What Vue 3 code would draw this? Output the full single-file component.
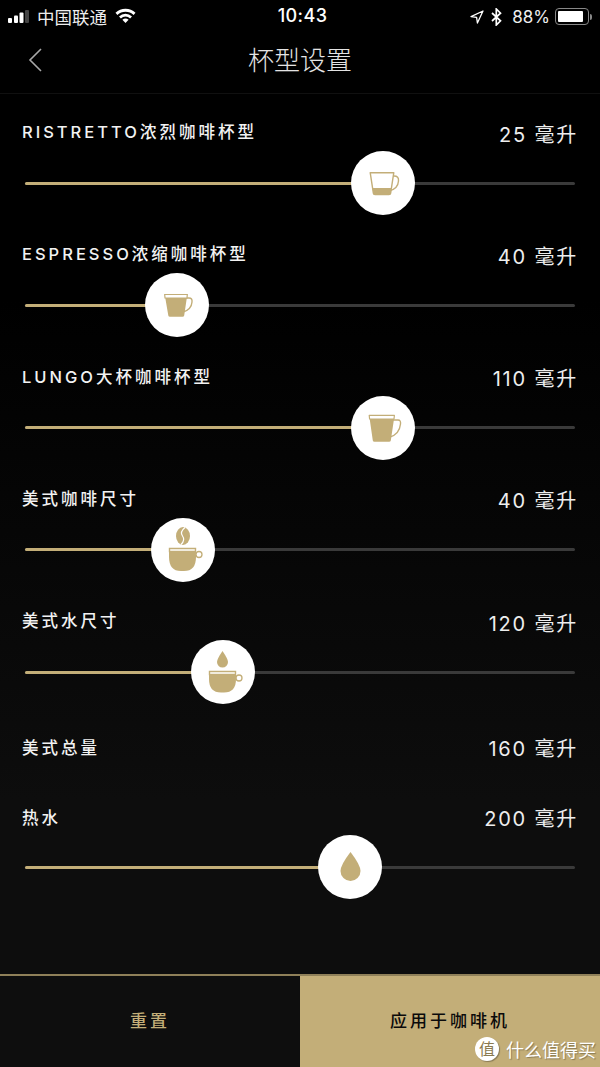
<template>
  <div class="page">
    <div class="status-bar">
      <div class="status-left">
        <svg class="signal" width="21" height="15" viewBox="0 0 21 15">
          <rect x="0" y="9" width="4" height="5" rx="1" fill="#fff" />
          <rect x="6" y="6.5" width="4" height="7.5" rx="1" fill="#fff" />
          <rect x="11.5" y="3.5" width="4" height="10.5" rx="1" fill="#fff" />
          <rect x="17" y="1" width="4" height="13" rx="1" fill="#444" />
        </svg>
        <span class="carrier">中国联通</span>
        <svg class="wifi" width="21" height="15" viewBox="0 0 21 15">
          <path d="M0.5 4.8 A14.5 14.5 0 0 1 20.5 4.8 L18.6 6.9 A11.8 11.8 0 0 0 2.4 6.9 Z" fill="#fff" />
          <path d="M4 8.4 A9.5 9.5 0 0 1 17 8.4 L15.1 10.4 A6.8 6.8 0 0 0 5.9 10.4 Z" fill="#fff" />
          <path d="M7.4 11.8 A4.6 4.6 0 0 1 13.6 11.8 L10.5 15 Z" fill="#fff" />
        </svg>
      </div>
      <span class="time">10:43</span>
      <div class="status-right">
        <svg width="14" height="14" viewBox="0 0 14 14">
          <path d="M13 1 L1 6.6 L6.6 7.4 L7.4 13 Z" fill="none" stroke="#fff" stroke-width="1.3" stroke-linejoin="round" />
        </svg>
        <svg class="bt" width="11" height="18" viewBox="0 0 11 18">
          <path d="M1 5 L9.5 12.8 L5.3 17 V1 L9.5 5.2 L1 13" fill="none" stroke="#fff" stroke-width="1.7" />
        </svg>
        <span class="battery-text">88%</span>
        <div class="battery">
          <div class="battery-level"></div>
        </div>
        <div class="battery-cap"></div>
      </div>
    </div>

    <div class="nav-bar">
      <svg class="back" width="16" height="26" viewBox="0 0 16 26">
        <path d="M14 2 L3 13 L14 24" fill="none" stroke="#a8a8a8" stroke-width="1.6" />
      </svg>
      <span class="nav-title">杯型设置</span>
    </div>

    <div class="content">
      <div v-for="row in rows" :key="row.label" class="row" :class="row.cls">
        <div class="row-head">
          <span class="row-label">{{ row.label }}</span>
          <span class="row-value">{{ row.value }} 毫升</span>
        </div>
        <div v-if="row.knob" class="slider">
          <div class="track">
            <div class="track-fill" :style="{ width: row.knob + 'px' }"></div>
          </div>
          <div class="knob" :style="{ left: row.knob + 'px' }">
            <svg width="64" height="64" viewBox="0 0 64 64">
              <g v-if="row.icon === 'ristretto'">
                <path d="M36.5 25 H43 Q48 25 47.5 30 Q47 38 38 40" fill="none" stroke="#c3ae78" stroke-width="1.4" />
                <path d="M19.2 21.7 H42.8 L39.6 42.4 Q39.4 43.6 38 43.6 H24 Q22.6 43.6 22.4 42.4 Z" fill="#fff" stroke="#c3ae78" stroke-width="1.4" stroke-linejoin="round" />
                <path d="M21.6 37 H40.4 L39.4 43.6 H22.6 Z" fill="#c3ae78" />
              </g>
              <g v-if="row.icon === 'espresso'">
                <path d="M40 25 H44 Q47.5 25 47 29 Q46.5 37 37 39.5" fill="none" stroke="#c3ae78" stroke-width="1.4" />
                <path d="M19.7 21.5 H42.3 L42 25 H20 Z" fill="#fff" stroke="#c3ae78" stroke-width="1.2" />
                <path d="M20.3 25 H41.8 L39.2 42.4 Q39 43.8 37.5 43.8 H25 Q23.5 43.8 23.3 42.4 Z" fill="#c3ae78" />
              </g>
              <g v-if="row.icon === 'lungo'">
                <path d="M42 24 H47 Q50 24 49.5 28 Q48.5 38 39 41" fill="none" stroke="#c3ae78" stroke-width="1.4" />
                <path d="M18.2 19.3 H43.4 L43 23 H18.6 Z" fill="#fff" stroke="#c3ae78" stroke-width="1.2" stroke-linejoin="round" />
                <path d="M18.7 23 H43 L39.8 44.4 Q39.6 45.8 38 45.8 H23.5 Q22 45.8 21.8 44.4 Z" fill="#c3ae78" />
              </g>
              <g v-if="row.icon === 'bean'">
                <ellipse cx="32" cy="18" rx="7" ry="9" fill="#c3ae78" />
                <path d="M34 9.5 Q28.5 14 31.5 18 Q34.5 22 30 26.5" fill="none" stroke="#fff" stroke-width="1.2" />
                <circle cx="48" cy="36.5" r="3" fill="none" stroke="#c3ae78" stroke-width="1.3" />
                <path d="M18.5 30.5 H44.5 V33.5 H18.5 Z" fill="#fff" stroke="#c3ae78" stroke-width="1.4" />
                <path d="M18 34 H45 V39 Q45 53 33 53 H30 Q18 53 18 39 Z" fill="#c3ae78" />
              </g>
              <g v-if="row.icon === 'water'">
                <path d="M31.5 11 Q37 19 37 22 A5.5 5.5 0 0 1 26 22 Q26 19 31.5 11 Z" fill="#c3ae78" />
                <circle cx="48" cy="38" r="3" fill="none" stroke="#c3ae78" stroke-width="1.3" />
                <path d="M18.5 31.5 H44.5 V34.5 H18.5 Z" fill="#fff" stroke="#c3ae78" stroke-width="1.4" />
                <path d="M18 35 H45 V39 Q45 52.5 33 52.5 H30 Q18 52.5 18 39 Z" fill="#c3ae78" />
              </g>
              <path v-if="row.icon === 'drop'" d="M32.5 17 Q42.5 30 42.5 36 A10 10 0 0 1 22.5 36 Q22.5 30 32.5 17 Z" fill="#c3ae78" />
            </svg>
          </div>
        </div>
      </div>
    </div>

    <div class="footer">
      <div class="btn-reset">重置</div>
      <div class="btn-apply">应用于咖啡机</div>
      <div class="watermark">
        <span class="wm-logo">值</span>
        <span class="wm-text">什么值得买</span>
      </div>
    </div>
  </div>
</template>

<script setup>
// knob = 滑块中心相对轨道左端的距离
const rows = [
  { label: 'RISTRETTO浓烈咖啡杯型', value: 25, knob: 357.5, icon: 'ristretto' },
  { label: 'ESPRESSO浓缩咖啡杯型', value: 40, knob: 151.5, icon: 'espresso' },
  { label: 'LUNGO大杯咖啡杯型', value: 110, knob: 357.5, icon: 'lungo' },
  { label: '美式咖啡尺寸', value: 40, knob: 158, icon: 'bean' },
  { label: '美式水尺寸', value: 120, knob: 198, icon: 'water' },
  { label: '美式总量', value: 160, cls: 'row-total' },
  { label: '热水', value: 200, knob: 324.5, icon: 'drop', cls: 'row-hot' }
]
</script>

<style scoped>
.page {
  width: 600px;
  height: 1067px;
  display: flex;
  flex-direction: column;
  background: linear-gradient(#000 0, #000 300px, #0d0d0d 800px);
  font-family: "Inter", "Noto Sans CJK SC", sans-serif;
  color: #fff;
  overflow: hidden;
}
.status-bar {
  height: 33px;
  flex-shrink: 0;
  position: relative;
  display: flex;
  align-items: center;
  justify-content: space-between;
  padding: 0 8px;
}
.status-left, .status-right { display: flex; align-items: center; }
.carrier { font-size: 17.5px; margin-left: 8px; color: #eee; }
.wifi { margin-left: 8px; margin-top: -3px; }
.time {
  position: absolute;
  left: 5px;
  right: 0;
  top: 5px;
  text-align: center;
  font-size: 18px;
  line-height: 22px;
  font-weight: 500;
  letter-spacing: 0.4px;
}
.bt { margin-left: 7px; }
.battery-text { font-size: 17px; margin-left: 10px; color: #eee; }
.battery {
  width: 34px;
  height: 17px;
  margin-left: 5px;
  border: 1px solid #888;
  border-radius: 4px;
  padding: 2px;
  box-sizing: border-box;
}
.battery-level { width: 88%; height: 100%; background: #fff; border-radius: 1px; }
.battery-cap { width: 2px; height: 6px; margin-left: 1px; background: #888; border-radius: 0 2px 2px 0; }
.nav-bar {
  height: 50px;
  flex-shrink: 0;
  display: flex;
  align-items: center;
  justify-content: center;
  position: relative;
  border-bottom: 1px solid #101010;
  padding-bottom: 10px;
}
.back { position: absolute; left: 27px; top: 14px; }
.nav-title { font-size: 26px; font-weight: 300; color: #e4e4e4; }
.content { flex: 1; }
.row { padding: 26px 22px 1.25px 22px; }
.row-head {
  height: 24px;
  display: flex;
  align-items: center;
  justify-content: space-between;
}
.row-label { font-size: 16.5px; font-weight: 500; letter-spacing: 3px; margin-bottom: 2px; color: #f2f2f2; }
.row-value {
  font-size: 20px;
  letter-spacing: 1.8px;
  color: #eee;
  margin-top: 2px;
}
.slider {
  position: relative;
  height: 64px;
  margin: 7px 3px 0 3px;
  display: flex;
  align-items: center;
}
.track { width: 100%; height: 3px; background: #3a3a3a; border-radius: 2px; }
.track-fill { height: 100%; background: #c3ae78; border-radius: 2px; }
.knob {
  position: absolute;
  top: 0;
  width: 64px;
  height: 64px;
  margin-left: -32px;
  background: #fff;
  border-radius: 50%;
}
.knob svg { display: block; }
.row-total { padding-top: 30.75px; padding-bottom: 0; }
.row-hot { padding-top: 46px; }
.row-total .row-value, .row-hot .row-value { margin-top: 0; margin-bottom: 2px; }
.row-hot .slider { margin-top: 5px; }
.footer {
  height: 93px;
  flex-shrink: 0;
  position: relative;
  display: flex;
  border-top: 2px solid #8f8059;
  box-sizing: border-box;
}
.btn-reset, .btn-apply {
  width: 50%;
  display: flex;
  align-items: center;
  justify-content: center;
  font-size: 17px;
  font-weight: 500;
  letter-spacing: 3px;
  padding-bottom: 4px;
  box-sizing: border-box;
}
.btn-reset { color: #c3ae78; background: #0e0e0e; }
.btn-apply { color: #0a0a0a; background: #c3ae78; }
.watermark {
  position: absolute;
  left: 475px;
  top: 60px;
  display: flex;
  align-items: center;
  gap: 7px;
}
.wm-logo {
  width: 24px;
  height: 24px;
  border-radius: 50%;
  background: #fff;
  color: #8a7a50;
  font-size: 16px;
  line-height: 24px;
  text-align: center;
  box-shadow: 1px 1px 1px rgba(0, 0, 0, 0.3);
}
.wm-text { font-size: 18px; color: #fff; text-shadow: 1px 1px 1px rgba(0, 0, 0, 0.3); }
</style>
